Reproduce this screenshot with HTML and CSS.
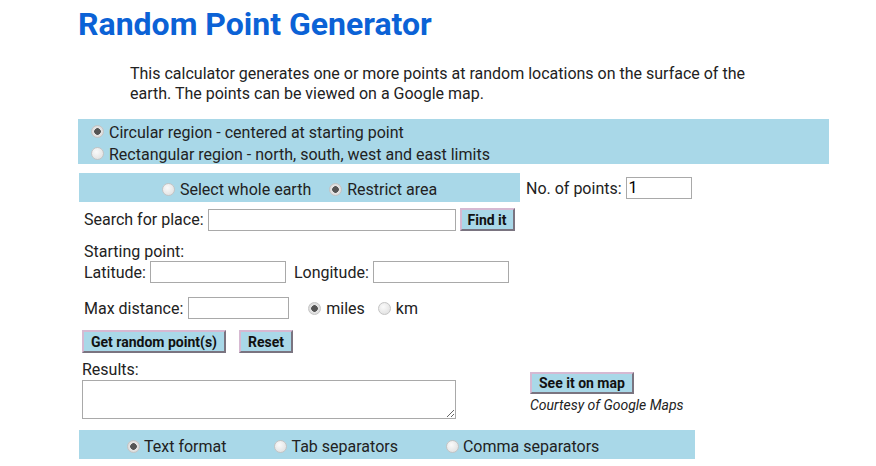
FILE: index.html
```html
<!DOCTYPE html>
<html lang="en">
<head>
  <meta charset="UTF-8">
  <title>Random Point Generator</title>
  <link rel="stylesheet" href="styles.css">
</head>
<body>
  <div class="page">
    <h1 class="title">Random Point Generator</h1>
    <p class="intro">This calculator generates one or more points at random locations on the surface of the earth. The points can be viewed on a Google map.</p>

    <form class="calc" onsubmit="return false">
      <div class="band region">
        <label class="opt"><input type="radio" name="region" checked><span>Circular region - centered at starting point</span></label>
        <label class="opt"><input type="radio" name="region"><span>Rectangular region - north, south, west and east limits</span></label>
      </div>

      <div class="area-row">
        <div class="band area">
          <label class="opt"><input type="radio" name="area"><span>Select whole earth</span></label>
          <label class="opt"><input type="radio" name="area" checked><span>Restrict area</span></label>
        </div>
        <label class="points">No. of points: <input type="text" class="box num" value="1"></label>
      </div>

      <div class="line search">
        <span>Search for place:</span>
        <input type="text" class="box place">
        <button class="btn">Find it</button>
      </div>

      <div class="start-label">Starting point:</div>
      <div class="line coords">
        <span>Latitude:</span>
        <input type="text" class="box coord">
        <span class="lon-label">Longitude:</span>
        <input type="text" class="box coord">
      </div>

      <div class="line distance">
        <span>Max distance:</span>
        <input type="text" class="box dist">
        <label class="opt miles"><input type="radio" name="unit" checked><span>miles</span></label>
        <label class="opt km"><input type="radio" name="unit"><span>km</span></label>
      </div>

      <div class="actions">
        <button class="btn wide">Get random point(s)</button>
        <button class="btn">Reset</button>
      </div>

      <div class="results-row">
        <div class="results">
          <div>Results:</div>
          <textarea class="box output"></textarea>
        </div>
        <div class="map">
          <button class="btn">See it on map</button>
          <div class="courtesy">Courtesy of Google Maps</div>
        </div>
      </div>

      <div class="band format">
        <label class="opt"><input type="radio" name="fmt" checked><span>Text format</span></label>
        <label class="opt"><input type="radio" name="fmt"><span>Tab separators</span></label>
        <label class="opt"><input type="radio" name="fmt"><span>Comma separators</span></label>
      </div>
    </form>
  </div>
</body>
</html>
```

FILE: styles.css
```css
body {
  margin: 0;
  font-family: Roboto, 'Liberation Sans', Arial, sans-serif;
  font-size: 16px;
  color: #222;
  background: #fff;
}
.page {
  margin-left: 78px;
  width: 751px;
}
.title {
  margin: 6px 0 0 0;
  font-size: 32px;
  line-height: 36px;
  font-weight: 700;
  color: #0b62d6;
}
.intro {
  margin: 22px 0 0 52px;
  width: 625px;
  line-height: 20px;
}
.band {
  background: #a9d8e8;
}
.opt {
  display: inline-flex;
  align-items: center;
  gap: 5px;
}
input[type="radio"] {
  appearance: none;
  -webkit-appearance: none;
  margin: 0;
  width: 13px;
  height: 13px;
  border-radius: 50%;
  border: 1px solid #c4c4c4;
  background: radial-gradient(circle at 40% 35%, #fafafa, #dcdcdc);
  box-sizing: border-box;
}
input[type="radio"]:checked {
  background: radial-gradient(circle, #555 0, #555 3px, #e4e4e4 3.6px, #d4d4d4 100%);
}
.region {
  margin-top: 15px;
  height: 45px;
  box-sizing: border-box;
  padding: 1px 0 0 13px;
  display: flex;
  flex-direction: column;
}
.region .opt {
  height: 23px;
}
.region .opt span {
  padding-top: 2px;
}
.area-row {
  display: flex;
  align-items: center;
  margin-top: 9px;
}
.area {
  margin-left: 1px;
  width: 441px;
  height: 29px;
  box-sizing: border-box;
  padding-top: 3px;
  display: flex;
  justify-content: center;
  align-items: center;
  gap: 18px;
}
.points {
  margin-left: 6px;
}
.box {
  box-sizing: border-box;
  border: 1px solid #a9a9a9;
  height: 22px;
  font: inherit;
  padding: 0 2px;
  background: #fff;
}
.num {
  width: 66px;
  height: 22px;
}
.line {
  display: flex;
  align-items: center;
  padding-left: 6px;
  gap: 5px;
}
.search {
  margin-top: 6px;
  gap: 4px;
}
.place {
  width: 248px;
}
.btn {
  font-family: Roboto, 'Liberation Sans', Arial, sans-serif;
  font-size: 14px;
  font-weight: 700;
  color: #111;
  background: #a9d8e8;
  border: 2px solid;
  border-color: #d6b9d2 #7a7480 #7a7480 #d6b9d2;
  height: 23px;
  padding: 0 7px;
  cursor: pointer;
}
.search .btn {
  padding: 0 6px;
}
.start-label {
  margin-top: 11px;
  padding-left: 6px;
  line-height: 20px;
}
.coords {
  margin-top: -1px;
  gap: 4px;
}
.coord {
  width: 136px;
}
.lon-label {
  margin-left: 4px;
}
.distance {
  margin-top: 14px;
}
.dist {
  width: 101px;
}
.miles {
  margin-left: 14px;
}
.km {
  margin-left: 8px;
}
.actions {
  display: flex;
  gap: 13px;
  margin-top: 11px;
  padding-left: 4px;
}
.actions .btn {
  height: 23px;
}
.results-row {
  display: flex;
  margin-top: 7px;
  padding-left: 4px;
}
.results {
  line-height: 20px;
}
.output {
  display: block;
  width: 374px;
  height: 39px;
  margin-top: 0;
  resize: vertical;
}
.map {
  margin-left: 74px;
  padding-top: 12px;
}
.map .btn {
  height: 22px;
}
.courtesy {
  margin-top: 3px;
  font-style: italic;
  font-size: 14px;
}
.format {
  margin-top: 11px;
  margin-left: 1px;
  width: 616px;
  height: 29px;
  display: flex;
  align-items: center;
  padding: 4px 0 0 48px;
  gap: 48px;
  box-sizing: border-box;
}
.format .opt {
  gap: 4px;
}
```
